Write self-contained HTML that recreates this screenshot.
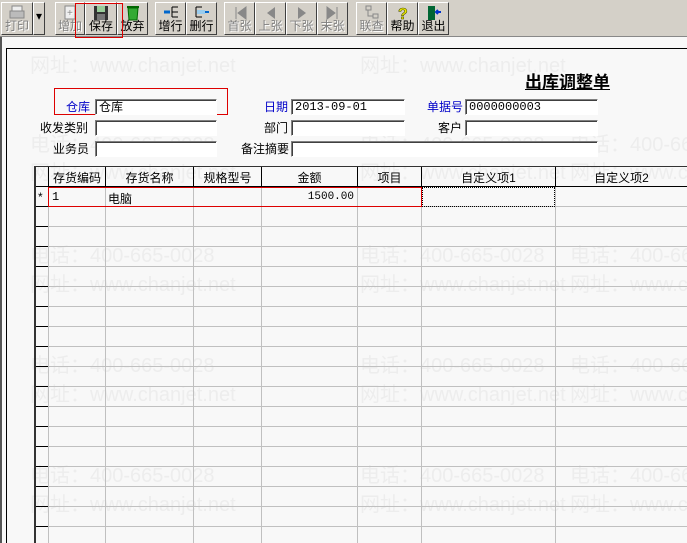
<!DOCTYPE html>
<html><head><meta charset="utf-8"><style>
*{margin:0;padding:0;box-sizing:border-box}
html,body{width:687px;height:543px;overflow:hidden}
body{background:#f8f8f8;font-family:"Liberation Sans","Noto Sans CJK SC",sans-serif;font-size:12px;position:relative;color:#000}
.a{position:absolute}
#tb{left:0;top:0;width:687px;height:37px;background:#d4d0c8;border-bottom:1px solid #888;z-index:5}
.b{position:absolute;top:2px;height:33px;border:1px solid;border-color:#fff #404040 #404040 #fff;text-align:center;font-size:12px;line-height:12px}
.b span{position:absolute;left:0;right:0;bottom:2px}
.b.d{color:#808080;text-shadow:1px 1px 0 #fff}
.b svg{position:absolute;left:50%;top:2px;margin-left:-8px}
.wm{position:absolute;color:#ededed;font-size:20px;white-space:nowrap;overflow:hidden}
.lbl{position:absolute;font-size:12px;white-space:nowrap}
.bl{color:#0000c8}
.in{position:absolute;height:16px;background:#fff;border:1px solid;border-color:#808080 #fff #fff #808080;box-shadow:inset 1px 1px 0 #404040;font-size:12px;line-height:14px;padding-left:3px;font-family:"Liberation Mono","Noto Sans CJK SC",monospace}
.vl{position:absolute;width:1px;background:#c0c0c0;top:167px;height:376px}
.hl{position:absolute;height:1px;background:#c0c0c0;left:48px;width:639px}
.tk{position:absolute;left:36px;width:12px;height:1px;background:#000}
.th{position:absolute;top:169px;font-size:12px;text-align:center}
</style></head><body>
<div class="wm" style="left:30px;top:49px">网址：www.chanjet.net</div>
<div class="wm" style="left:360px;top:49px">网址：www.chanjet.net</div>
<div class="wm" style="left:30px;top:128px">电话：400-665-0028</div>
<div class="wm" style="left:360px;top:128px">电话：400-665-0028</div>
<div class="wm" style="left:570px;top:128px;width:117px">电话：400-665-0028</div>
<div class="wm" style="left:30px;top:156px">网址：www.chanjet.net</div>
<div class="wm" style="left:360px;top:156px">网址：www.chanjet.net</div>
<div class="wm" style="left:570px;top:156px;width:117px">网址：www.chanjet.net</div>
<div class="wm" style="left:30px;top:239px">电话：400-665-0028</div>
<div class="wm" style="left:360px;top:239px">电话：400-665-0028</div>
<div class="wm" style="left:570px;top:239px;width:117px">电话：400-665-0028</div>
<div class="wm" style="left:30px;top:268px">网址：www.chanjet.net</div>
<div class="wm" style="left:360px;top:268px">网址：www.chanjet.net</div>
<div class="wm" style="left:570px;top:268px;width:117px">网址：www.chanjet.net</div>
<div class="wm" style="left:30px;top:349px">电话：400-665-0028</div>
<div class="wm" style="left:360px;top:349px">电话：400-665-0028</div>
<div class="wm" style="left:570px;top:349px;width:117px">电话：400-665-0028</div>
<div class="wm" style="left:30px;top:378px">网址：www.chanjet.net</div>
<div class="wm" style="left:360px;top:378px">网址：www.chanjet.net</div>
<div class="wm" style="left:570px;top:378px;width:117px">网址：www.chanjet.net</div>
<div class="wm" style="left:30px;top:459px">电话：400-665-0028</div>
<div class="wm" style="left:360px;top:459px">电话：400-665-0028</div>
<div class="wm" style="left:570px;top:459px;width:117px">电话：400-665-0028</div>
<div class="wm" style="left:30px;top:488px">网址：www.chanjet.net</div>
<div class="wm" style="left:360px;top:488px">网址：www.chanjet.net</div>
<div class="wm" style="left:570px;top:488px;width:117px">网址：www.chanjet.net</div>

<div class="a" style="left:0;top:37px;width:2px;height:506px;background:#555"></div>
<div class="a" style="left:6px;top:48px;width:681px;height:495px;border-top:1px solid #000;border-left:1px solid #000"></div>

<div id="tb" class="a">
<div class="b d" style="left:1px;width:32px"><svg width="16" height="16"><rect x="3" y="1" width="10" height="6" fill="#eee" stroke="#888"/><rect x="1" y="6" width="14" height="7" fill="#bbb" stroke="#888"/></svg><span>打印</span></div>
<div class="b" style="left:33px;width:12px"><span style="bottom:12px">▾</span></div>
<div class="b d" style="left:55px;width:30px"><svg width="16" height="16"><rect x="3" y="1" width="10" height="13" fill="#eee" stroke="#888"/><text x="5" y="11" font-size="10" fill="#888">+</text></svg><span>增加</span></div>
<div class="b" style="left:85px;width:32px"><svg width="16" height="16"><rect x="1" y="1" width="14" height="14" fill="#333"/><rect x="4" y="1" width="8" height="6" fill="#9c9"/><rect x="4" y="9" width="8" height="6" fill="#777"/></svg><span>保存</span></div>
<div class="b" style="left:117px;width:31px"><svg width="16" height="16"><path d="M3 3h10l-1 12H4z" fill="#3a3" stroke="#060"/><rect x="2" y="1" width="12" height="2" fill="#060"/></svg><span>放弃</span></div>
<div class="b" style="left:155px;width:31px"><svg width="16" height="16"><path d="M1 7h6" stroke="#06c" stroke-width="3"/><path d="M9 2h6M9 7h6M9 12h6M9 2v10" stroke="#000"/></svg><span>增行</span></div>
<div class="b" style="left:186px;width:31px"><svg width="16" height="16"><path d="M2 2h6M2 12h6M2 2v10" stroke="#000"/><rect x="3" y="5" width="8" height="4" fill="#9ce"/><path d="M11 7h4" stroke="#06c" stroke-width="2"/></svg><span>删行</span></div>
<div class="b d" style="left:224px;width:31px"><svg width="16" height="16"><path d="M4 2v12M14 2L6 8l8 6z" fill="#888" stroke="#888"/></svg><span>首张</span></div>
<div class="b d" style="left:255px;width:31px"><svg width="16" height="16"><path d="M12 2L4 8l8 6z" fill="#888"/></svg><span>上张</span></div>
<div class="b d" style="left:286px;width:31px"><svg width="16" height="16"><path d="M4 2l8 6-8 6z" fill="#888"/></svg><span>下张</span></div>
<div class="b d" style="left:317px;width:31px"><svg width="16" height="16"><path d="M12 2v12M2 2l8 6-8 6z" fill="#888" stroke="#888"/></svg><span>末张</span></div>
<div class="b d" style="left:356px;width:31px"><svg width="16" height="16"><rect x="2" y="1" width="5" height="4" fill="none" stroke="#888"/><rect x="9" y="9" width="5" height="4" fill="none" stroke="#888"/><path d="M4 5v6h5" stroke="#888" fill="none"/></svg><span>联查</span></div>
<div class="b" style="left:387px;width:31px"><svg width="16" height="16"><text x="3" y="14" font-size="16" font-weight="bold" fill="#ee0" stroke="#550" stroke-width=".6">?</text></svg><span>帮助</span></div>
<div class="b" style="left:418px;width:31px"><svg width="16" height="16"><rect x="2" y="1" width="7" height="14" fill="#063"/><path d="M15 7H10M12 5l-2 2 2 2" stroke="#03c" stroke-width="2" fill="none"/></svg><span>退出</span></div>
<div class="a" style="left:75px;top:3px;width:48px;height:35px;border:1px solid #d00"></div>
</div>

<div class="a" style="left:525px;top:68px;font-size:17px;font-weight:bold;text-decoration:underline">出库调整单</div>

<div class="a" style="left:54px;top:88px;width:174px;height:27px;border:1px solid #d00"></div>
<div class="lbl bl" style="left:66px;top:98px">仓库</div>
<div class="in" style="left:95px;top:99px;width:122px;font-family:'Liberation Sans','Noto Sans CJK SC',sans-serif">仓库</div>
<div class="lbl bl" style="left:264px;top:98px">日期</div>
<div class="in" style="left:291px;top:99px;width:114px">2013-09-01</div>
<div class="lbl bl" style="left:427px;top:98px">单据号</div>
<div class="in" style="left:465px;top:99px;width:133px">0000000003</div>

<div class="lbl" style="left:40px;top:119px">收发类别</div>
<div class="in" style="left:95px;top:120px;width:122px"></div>
<div class="lbl" style="left:264px;top:119px">部门</div>
<div class="in" style="left:291px;top:120px;width:114px"></div>
<div class="lbl" style="left:438px;top:119px">客户</div>
<div class="in" style="left:465px;top:120px;width:133px"></div>

<div class="lbl" style="left:53px;top:140px">业务员</div>
<div class="in" style="left:95px;top:141px;width:122px"></div>
<div class="lbl" style="left:241px;top:140px">备注摘要</div>
<div class="in" style="left:291px;top:141px;width:307px"></div>

<div class="a" style="left:35px;top:166px;width:652px;height:1px;background:#333"></div>
<div class="a" style="left:34px;top:166px;width:2px;height:377px;background:#333"></div>
<div class="a" style="left:48px;top:186px;width:639px;height:1px;background:#000"></div>
<div class="vl" style="left:48px"></div>
<div class="vl" style="left:105px"></div>
<div class="vl" style="left:193px"></div>
<div class="vl" style="left:261px"></div>
<div class="vl" style="left:357px"></div>
<div class="vl" style="left:421px"></div>
<div class="vl" style="left:555px"></div>
<div class="a" style="left:48px;top:167px;width:1px;height:20px;background:#000"></div>
<div class="a" style="left:105px;top:167px;width:1px;height:20px;background:#000"></div>
<div class="a" style="left:193px;top:167px;width:1px;height:20px;background:#000"></div>
<div class="a" style="left:261px;top:167px;width:1px;height:20px;background:#000"></div>
<div class="a" style="left:357px;top:167px;width:1px;height:20px;background:#000"></div>
<div class="a" style="left:421px;top:167px;width:1px;height:20px;background:#000"></div>
<div class="a" style="left:555px;top:167px;width:1px;height:20px;background:#000"></div>

<div class="hl" style="top:206px"></div><div class="hl" style="top:226px"></div><div class="hl" style="top:246px"></div><div class="hl" style="top:266px"></div><div class="hl" style="top:286px"></div><div class="hl" style="top:306px"></div><div class="hl" style="top:326px"></div><div class="hl" style="top:346px"></div><div class="hl" style="top:366px"></div><div class="hl" style="top:386px"></div><div class="hl" style="top:406px"></div><div class="hl" style="top:426px"></div><div class="hl" style="top:446px"></div><div class="hl" style="top:466px"></div><div class="hl" style="top:486px"></div><div class="hl" style="top:506px"></div><div class="hl" style="top:526px"></div>
<div class="tk" style="top:186px"></div><div class="tk" style="top:206px"></div><div class="tk" style="top:226px"></div><div class="tk" style="top:246px"></div><div class="tk" style="top:266px"></div><div class="tk" style="top:286px"></div><div class="tk" style="top:306px"></div><div class="tk" style="top:326px"></div><div class="tk" style="top:346px"></div><div class="tk" style="top:366px"></div><div class="tk" style="top:386px"></div><div class="tk" style="top:406px"></div><div class="tk" style="top:426px"></div><div class="tk" style="top:446px"></div><div class="tk" style="top:466px"></div><div class="tk" style="top:486px"></div><div class="tk" style="top:506px"></div><div class="tk" style="top:526px"></div>

<div class="th" style="left:49px;width:56px">存货编码</div>
<div class="th" style="left:106px;width:87px">存货名称</div>
<div class="th" style="left:194px;width:67px">规格型号</div>
<div class="th" style="left:262px;width:95px">金额</div>
<div class="th" style="left:358px;width:63px">项目</div>
<div class="th" style="left:422px;width:133px">自定义项1</div>
<div class="th" style="left:556px;width:131px">自定义项2</div>

<div class="a" style="left:38px;top:190px">*</div>
<div class="a" style="left:52px;top:190px;font-family:'Liberation Mono',monospace">1</div>
<div class="a" style="left:108px;top:190px">电脑</div>
<div class="a" style="left:300px;top:191px;width:54px;text-align:right;font-family:'Liberation Mono',monospace;font-size:11px">1500.00</div>
<div class="a" style="left:48px;top:187px;width:374px;height:20px;border:1px solid #d00"></div>
<div class="a" style="left:422px;top:187px;width:133px;height:20px;border:1px dotted #000"></div>
</body></html>
